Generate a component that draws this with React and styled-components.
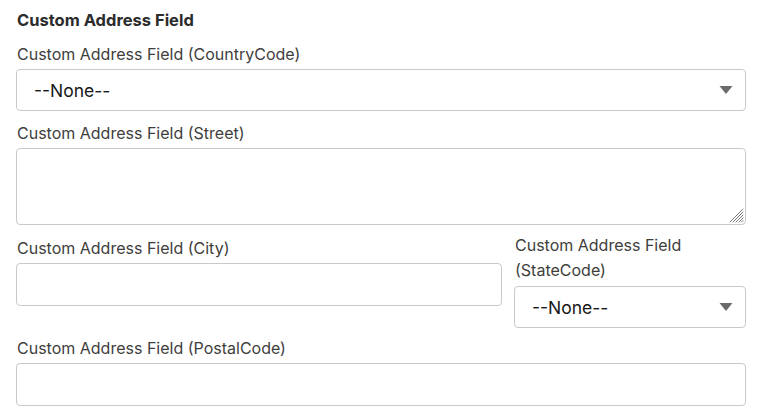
import React from "react";
import styled, { createGlobalStyle } from "styled-components";

const GlobalStyle = createGlobalStyle`
  body {
    margin: 0;
    background: #ffffff;
    font-family: Inter, "Liberation Sans", Arial, sans-serif;
    color: #181818;
  }
`;

const Form = styled.div`
  width: 730px;
  padding: 10px 22px 12px 16px;
  display: flex;
  flex-direction: column;
`;

const Title = styled.h3`
  margin: 0 0 14px 1px;
  font-size: 16.5px;
  line-height: 20px;
  font-weight: 700;
  color: #2b2b2b;
`;

const Field = styled.div`
  display: flex;
  flex-direction: column;
  margin-bottom: ${(p) => p.$gap ?? 12}px;
  position: relative;
`;

const Label = styled.label`
  font-size: 16px;
  line-height: ${(p) => (p.$wrap ? 25 : 20)}px;
  color: #3e3e3c;
  margin: ${(p) => (p.$wrap ? "-5px 0 3px 1px" : "0 0 5px 1px")};
`;

const Box = styled.div`
  position: relative;
  box-sizing: border-box;
  height: ${(p) => p.$h ?? 42}px;
  border: 1px solid #c9c9c9;
  border-radius: 4px;
  background: #ffffff;
`;

const Select = styled.select`
  appearance: none;
  -webkit-appearance: none;
  width: 100%;
  height: 100%;
  border: none;
  background: transparent;
  padding: 0 40px 0 17px;
  font-family: Inter, "Liberation Sans", Arial, sans-serif;
  font-size: 17.5px;
  color: #181818;
  outline: none;
`;

const Input = styled.input`
  width: 100%;
  height: 100%;
  box-sizing: border-box;
  border: none;
  background: transparent;
  padding: 0 16px;
  font-family: Inter, "Liberation Sans", Arial, sans-serif;
  font-size: 16px;
  outline: none;
`;

const TextArea = styled.textarea`
  width: 100%;
  height: 100%;
  box-sizing: border-box;
  border: none;
  background: transparent;
  resize: none;
  padding: 8px 16px;
  font-family: Inter, "Liberation Sans", Arial, sans-serif;
  font-size: 16px;
  outline: none;
`;

const Caret = styled.svg`
  position: absolute;
  right: 12px;
  top: 50%;
  transform: translateY(-50%);
  pointer-events: none;
`;

const Grip = styled.svg`
  position: absolute;
  right: 1px;
  bottom: 1px;
  pointer-events: none;
`;

const Row = styled.div`
  display: grid;
  grid-template-columns: 486fr 232fr;
  column-gap: 12px;
  align-items: start;
  margin-bottom: 10px;
`;

const Arrow = () => (
  <Caret width="14" height="9" viewBox="0 0 14 9">
    <path d="M0.5 0.5 H13.5 L7 8.5 Z" fill="#6b6b6b" />
  </Caret>
);

const ResizeGrip = () => (
  <Grip width="17" height="17" viewBox="0 0 17 17">
    <g stroke="#7a7a7a" strokeWidth="1" strokeLinecap="round">
      <path d="M3 16 L16 3" />
      <path d="M6 16 L16 6" />
      <path d="M9 16 L16 9" />
      <path d="M12 16 L16 12" />
      <path d="M14.5 16 L16 14.5" />
    </g>
  </Grip>
);

export default function App() {
  return (
    <Form>
      <GlobalStyle />
      <Title>Custom Address Field</Title>

      <Field>
        <Label>Custom Address Field (CountryCode)</Label>
        <Box>
          <Select defaultValue="">
            <option value="">--None--</option>
          </Select>
          <Arrow />
        </Box>
      </Field>

      <Field $gap={13}>
        <Label>Custom Address Field (Street)</Label>
        <Box $h={77}>
          <TextArea />
          <ResizeGrip />
        </Box>
      </Field>

      <Row>
        <Field $gap={0}>
          <Label>Custom Address Field (City)</Label>
          <Box $h={43}>
            <Input />
          </Box>
        </Field>
        <Field $gap={0}>
          <Label $wrap>
            Custom Address Field
            <br />
            (StateCode)
          </Label>
          <Box>
            <Select defaultValue="">
              <option value="">--None--</option>
            </Select>
            <Arrow />
          </Box>
        </Field>
      </Row>

      <Field $gap={0}>
        <Label>Custom Address Field (PostalCode)</Label>
        <Box $h={43}>
          <Input />
        </Box>
      </Field>
    </Form>
  );
}
